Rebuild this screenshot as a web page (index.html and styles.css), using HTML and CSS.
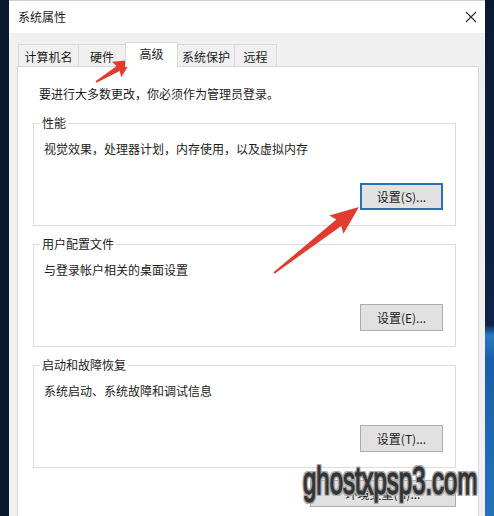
FILE: index.html
```html
<!DOCTYPE html>
<html lang="zh-CN">
<head>
<meta charset="utf-8">
<title>系统属性</title>
<link rel="stylesheet" href="styles.css">
</head>
<body>
<div class="screen">
  <div class="edge-left"></div>
  <div class="window">
    <div class="titlebar">
      <span class="title">系统属性</span>
      <svg class="close" width="12" height="12" viewBox="0 0 12 12"><path d="M1 1L11 11M11 1L1 11" stroke="#2a2a2a" stroke-width="1.1" fill="none"/></svg>
    </div>
    <div class="body">
      <div class="tabs">
        <div class="tab t1">计算机名</div>
        <div class="tab t2">硬件</div>
        <div class="tab t3 active">高级</div>
        <div class="tab t4">系统保护</div>
        <div class="tab t5">远程</div>
      </div>
      <div class="panel">
        <p class="notice">要进行大多数更改，你必须作为管理员登录。</p>
        <fieldset class="group">
          <legend>性能</legend>
          <p class="desc">视觉效果，处理器计划，内存使用，以及虚拟内存</p>
          <div class="actions"><button class="btn default">设置(S)...</button></div>
        </fieldset>
        <fieldset class="group">
          <legend>用户配置文件</legend>
          <p class="desc">与登录帐户相关的桌面设置</p>
          <div class="actions"><button class="btn">设置(E)...</button></div>
        </fieldset>
        <fieldset class="group">
          <legend>启动和故障恢复</legend>
          <p class="desc">系统启动、系统故障和调试信息</p>
          <div class="actions"><button class="btn">设置(T)...</button></div>
        </fieldset>
        <div class="env-row"><button class="btn env">环境变量(N)...</button></div>
      </div>
    </div>
  </div>
  <div class="edge-right"></div>

  <svg class="arrows" width="494" height="516" viewBox="0 0 494 516">
    <polygon transform="translate(96 82) rotate(-31.4)" fill="#e23b30" points="0,-0.8 26,-3 24,-9 42.2,0 24,9 26,3 0,0.8"/>
    <polygon transform="translate(274 273) rotate(-37.8)" fill="#e23b30" points="0,-0.9 82,-4 79,-11.5 107.5,0 79,11.5 82,4 0,0.9"/>
  </svg>
  <div class="watermark">ghostxpsp3.com</div>
</div>
</body>
</html>
```

FILE: styles.css
```css
* { box-sizing: border-box; }
html, body { margin: 0; padding: 0; }
body {
  width: 494px;
  height: 516px;
  overflow: hidden;
  background: #0b1a33;
  font-family: "Noto Sans CJK SC", "Microsoft YaHei", sans-serif;
  font-size: 12px;
  color: #1b1b1b;
}
.screen {
  position: relative;
  display: flex;
  width: 494px;
  height: 516px;
}
.edge-left {
  width: 9px;
  background: #0a1930;
}
.window {
  width: 476px;
  height: 516px;
  background: #f0f0f0;
  display: flex;
  flex-direction: column;
  border-top: 1px solid #cfcfcf;
}
.edge-right {
  width: 9px;
  background: linear-gradient(#0b1a33 0, #0e2347 325px, #2a78c8 335px, #1b5ea9 360px, #2570c0 100%);
}
.titlebar {
  height: 32px;
  flex: none;
  background: #fff;
  display: flex;
  align-items: center;
  justify-content: space-between;
  padding: 0 8px 0 9px;
}
.title { line-height: 16px; }
.close { display: block; }
.body {
  flex: 1;
  display: flex;
  flex-direction: column;
  padding: 9px 6px 0 8px;
}
.tabs {
  display: flex;
  align-items: flex-end;
  height: 25px;
  margin: 0 0 -1px 1px;
  flex: none;
}
.tab {
  height: 22px;
  margin-bottom: 1px;
  border: 1px solid #d9d9d9;
  border-bottom: none;
  background: #f0f0f0;
  display: flex;
  align-items: center;
  justify-content: center;
  padding-top: 2px;
  line-height: 16px;
  margin-left: -1px;
}
.t1 { width: 61px; margin-left: 0; }
.t2 { width: 48px; }
.t3 { width: 53px; }
.t4 { width: 58px; }
.t5 { width: 43px; }
.tab.active {
  height: 25px;
  margin-bottom: 0;
  background: #fff;
  padding-top: 0;
  padding-bottom: 2px;
  position: relative;
  z-index: 1;
}
.panel {
  flex: 1;
  background: #fff;
  border: 1px solid #d9d9d9;
  border-bottom: none;
  padding: 19px 22px 0 15px;
}
.notice {
  margin: 0 0 13px 6px;
  line-height: 16px;
}
.group {
  margin: 0 0 10px 0;
  min-width: 0;
  border: 1px solid #dcdcdc;
  padding: 10px 12px 15px 10px;
}
.group legend {
  padding: 0 2px;
  margin-left: -4px;
  line-height: 16px;
}
.desc {
  margin: 0;
  line-height: 16px;
}
.actions {
  display: flex;
  justify-content: flex-end;
  margin-top: 26px;
}
.btn {
  width: 83px;
  height: 27px;
  padding: 0;
  background: #e1e1e1;
  border: 1px solid #adadad;
  font: inherit;
  color: #1b1b1b;
  line-height: 16px;
}
.btn.default {
  border: 2px solid #2b6fb4;
}
.env-row {
  display: flex;
  justify-content: flex-end;
  margin-top: 12px;
}
.btn.env { width: 146px; }
.arrows {
  position: absolute;
  left: 0;
  top: 0;
  pointer-events: none;
}
.watermark {
  position: absolute;
  left: 303px;
  top: 462px;
  font-family: "Liberation Sans", Arial, sans-serif;
  font-size: 38px;
  line-height: 38px;
  color: #333;
  -webkit-text-stroke: 1.3px #333;
  transform: scaleX(0.63);
  transform-origin: 0 0;
  white-space: nowrap;
  text-shadow:
    2px 0 0 #a9a9a9, -2px 0 0 #a9a9a9, 0 2px 0 #a9a9a9, 0 -2px 0 #a9a9a9,
    2px 2px 0 #a9a9a9, -2px -2px 0 #a9a9a9, 2px -2px 0 #a9a9a9, -2px 2px 0 #a9a9a9;
}
```
